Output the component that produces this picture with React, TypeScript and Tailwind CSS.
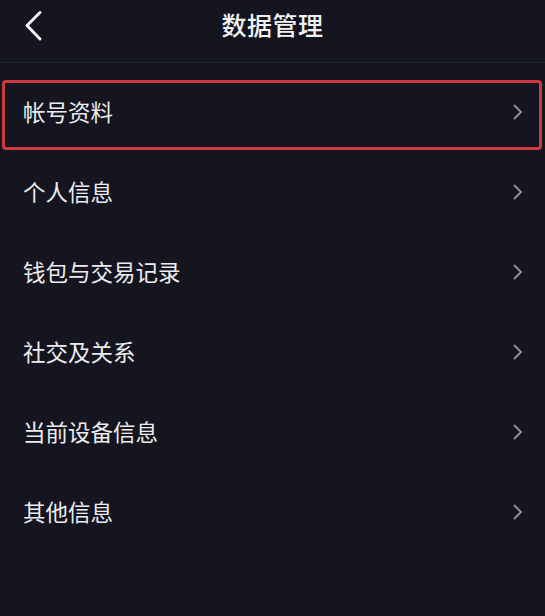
import React from "react";

const items = ["帐号资料", "个人信息", "钱包与交易记录", "社交及关系", "当前设备信息", "其他信息"];

function Chevron() {
  return (
    <svg width="12" height="16" viewBox="0 0 12 16" fill="none">
      <path d="M2.5 1.5 L9 8 L2.5 14.5" stroke="#8d8e96" strokeWidth="2" strokeLinecap="round" strokeLinejoin="round" />
    </svg>
  );
}

export default function App() {
  return (
    <div
      className="w-[545px] h-[616px] bg-[#14151f] text-[#ececef] overflow-hidden"
      style={{ fontFamily: '"Noto Sans CJK SC", "Noto Sans", sans-serif' }}
    >
      <div className="relative h-[63px] flex items-center justify-center border-b border-[#1f2230]">
        <svg className="absolute left-[22px] top-[8px]" width="24" height="36" viewBox="0 0 24 36" fill="none">
          <path d="M18 4.5 L5 17.5 L18 31" stroke="#f2f2f2" strokeWidth="3" strokeLinecap="round" strokeLinejoin="round" />
        </svg>
        <span className="text-[25px] font-medium text-[#f2f2f4] tracking-[0.5px] leading-none -mt-[14px]">数据管理</span>
      </div>
      <div className="pt-[9px]">
        {items.map((t, i) => (
          <div key={t} className="relative h-[80px] flex items-center justify-between pl-[23px] pr-[21px]">
            {i === 0 && (
              <div className="absolute left-[2px] right-[3px] top-[8px] bottom-[2px] border-[3px] border-[#cf3a3e] rounded-[4px]" />
            )}
            <span className="text-[22.5px] leading-none -mt-[1px]">{t}</span>
            <Chevron />
          </div>
        ))}
      </div>
    </div>
  );
}
